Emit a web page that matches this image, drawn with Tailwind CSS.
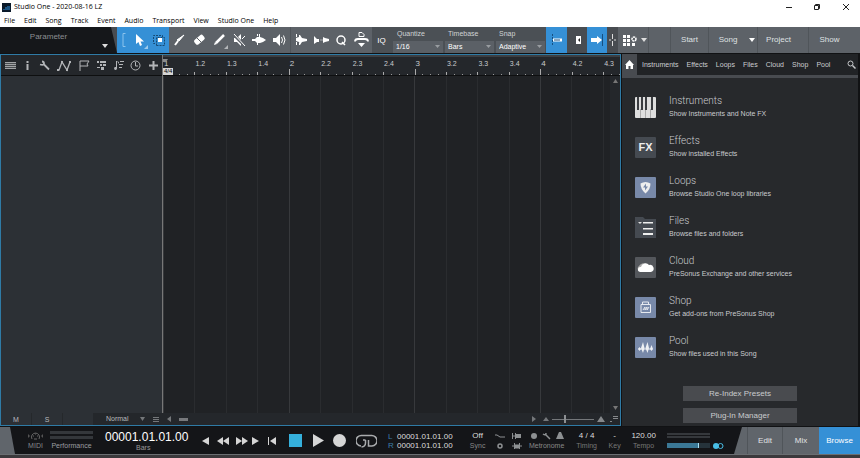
<!DOCTYPE html>
<html lang="en">

<head>
  <meta charset="UTF-8" />
  <meta name="viewport" content="width=device-width, initial-scale=1.0" />
  <title>Studio One - 2020-08-16 LZ</title>
  <script src="https://cdn.jsdelivr.net/npm/@tailwindcss/browser@4"></script>
</head>

<body class="flex flex-col h-screen overflow-hidden bg-[#111214] font-['Liberation_Sans',Arial,sans-serif] text-[8px] leading-[10px] text-[#c9cbce]">

  <!-- Title bar -->
  <header class="shrink-0 h-[27px] bg-white text-black font-['Open_Sans','Noto_Sans',sans-serif]">
    <div class="flex items-center h-[14px] pl-[2px]">
      <svg class="w-[9px] h-[9px]" viewBox="0 0 9 9"><rect width="9" height="9" fill="#0b1a2a" /><path d="M1 6h2V4h2V3h3v4H1z" fill="#1d5684" /></svg>
      <h1 class="ml-[3px] text-[7px]">Studio One - 2020-08-16 LZ</h1>
      <div class="ml-auto flex text-[#222]">
        <button aria-label="Minimize" class="w-[29px] h-[12px] flex justify-center items-center"><svg class="w-[8px] h-[8px]" viewBox="0 0 8 8"><path d="M1 4.5h6" stroke="currentColor" /></svg></button>
        <button aria-label="Restore" class="w-[28px] h-[12px] flex justify-center items-center"><svg class="w-[8px] h-[8px]" viewBox="0 0 8 8" fill="none" stroke="currentColor"><path d="M1.5 2.5h4v4h-4zM2.500 2.500v-1h4v4h-1" /></svg></button>
        <button aria-label="Close" class="w-[29px] h-[12px] flex justify-center items-center"><svg class="w-[8px] h-[8px]" viewBox="0 0 8 8"><path d="M1 1l6 6M7 1L1 7" stroke="currentColor" /></svg></button>
      </div>
    </div>
    <nav class="flex h-[13px] items-center pl-[4px] gap-[9px] text-[7px]">
      <button>File</button>
      <button>Edit</button>
      <button>Song</button>
      <button>Track</button>
      <button>Event</button>
      <button>Audio</button>
      <button>Transport</button>
      <button>View</button>
      <button>Studio One</button>
      <button>Help</button>
    </nav>
  </header>

  <!-- Toolbar -->
  <div class="shrink-0 flex h-[26px] bg-[#5d6268] text-white">
    <div class="w-[117px] bg-[#484c51]">
      <button class="relative w-full h-full bg-[#15171a] [clip-path:polygon(0_0,111px_0,100%_100%,0_100%)] text-[8px] text-[#8b8e92]">
        <span class="block -mt-[7px] pr-[20px]">Parameter</span>
        <svg class="absolute right-[9px] bottom-[5px] w-[6px] h-[4px]" viewBox="0 0 6 4"><path d="M0 0h6L3 4z" fill="#ddd" /></svg>
      </button>
    </div>
    <div class="flex items-center bg-[#3590d6] w-[52px]">
      <svg class="w-[12px] h-[16px]" viewBox="0 0 12 16" fill="none"><path d="M8.500 1.500h-2.500v13h2.500" stroke="#8cc3ec" /></svg>
      <button aria-label="Arrow tool" class="w-[20px]"><svg class="w-[20px] h-[20px]" viewBox="0 0 20 20"><path d="M7 4v10l2.500-2 1.500 4 2-1-1.500-3.500H15z" fill="#fff" /><path d="M19 15v4h-4z" fill="#9ccbee" /></svg></button>
      <button aria-label="Range tool" class="w-[20px]"><svg class="w-[20px] h-[20px]" viewBox="0 0 20 20"><path d="M13.500 7V5.500h-9v8H7" fill="none" stroke="#174a74" stroke-dasharray="2 1" /><rect x="9" y="8" width="4" height="4" fill="#fff" /><path d="M7.500 15.500h8v-8h-8z" fill="none" stroke="#174a74" stroke-dasharray="2 1" /></svg></button>
    </div>
    <div class="flex items-center w-[122px] border-r border-[#50555a]">
      <button aria-label="Split tool"><svg class="w-[20px] h-[20px]" viewBox="0 0 20 20"><path d="M15 5l-5 6-2-1z" fill="#fff" stroke="#fff" /><path d="M9 11l-3 4" stroke="#fff" stroke-width="2" /></svg></button>
      <button aria-label="Eraser tool"><svg class="w-[20px] h-[20px]" viewBox="0 0 20 20"><rect x="5" y="7" width="11" height="6" rx="2" fill="#fff" transform="rotate(-40 10 10)" /><path d="M8 8l4 4" stroke="#5d6268" /></svg></button>
      <button aria-label="Paint tool"><svg class="w-[20px] h-[20px]" viewBox="0 0 20 20"><path d="M15 5l-8 8" stroke="#fff" stroke-width="2.500" /><path d="M6 12l2 2-3 1z" fill="#fff" /><path d="M19 15v4h-4z" fill="#b3b6b9" /></svg></button>
      <button aria-label="Mute tool"><svg class="w-[20px] h-[20px]" viewBox="0 0 20 20"><path d="M5 8h3l4-4v12l-4-4H5z" fill="#fff" /><path d="M4 4l12 12" stroke="#5d6268" stroke-width="3" /><path d="M5 4l11 12M13 9l3-3" stroke="#fff" /></svg></button>
      <button aria-label="Bend tool"><svg class="w-[20px] h-[20px]" viewBox="0 0 20 20"><path d="M3 9h3l2-2h2v-3h1v3l3 1 3 2-3 2-3 1H8l-2-2H3z" fill="#fff" /><path d="M8.500 4v12" stroke="#fff" stroke-dasharray="2 1" /></svg></button>
      <button aria-label="Listen tool"><svg class="w-[20px] h-[20px]" viewBox="0 0 20 20"><path d="M4 8h3l4-4v12l-4-4H4z" fill="#fff" /><path d="M12.500 7q2 3 0 6M14.500 5.500q3 4.500 0 9" fill="none" stroke="#fff" /></svg></button>
    </div>
    <div class="flex items-center w-[81px]">
      <button aria-label="Strip silence"><svg class="w-[20px] h-[20px]" viewBox="0 0 20 20"><path d="M5.500 4v12M8.500 5v10" stroke="#fff" stroke-dasharray="3 1" /><path d="M5 8l3-1 1-2 2 3 5 1v2l-5 1-2 3-1-3-3-1z" fill="#fff" /></svg></button>
      <button aria-label="Transients"><svg class="w-[20px] h-[20px]" viewBox="0 0 20 20"><path d="M3 6v8l3-2h2V9H6zM12 7v6l2-1 4-1V9l-4-1z" fill="#fff" /><path d="M9.500 10h3" stroke="#fff" stroke-dasharray="1 1" /></svg></button>
      <button aria-label="Quantize"><svg class="w-[20px] h-[20px]" viewBox="0 0 20 20" fill="none" stroke="#fff"><circle cx="10" cy="10" r="4" stroke-width="1.500" /><path d="M11 12l3 3" stroke-width="1.500" /></svg></button>
      <button aria-label="Audio bend"><svg class="w-[20px] h-[20px]" viewBox="0 0 20 20"><path d="M8 2.500h3l2 2v2H8z" fill="none" stroke="#fff" /><path d="M4 11.500q0-2.500 3-2.500h7q3 0 3 2.500" fill="none" stroke="#fff" stroke-width="1.800" /><path d="M7 13h7l-3.500 4z" fill="#fff" /></svg></button>
    </div>
    <div class="flex items-center w-[174px] bg-[#4b5055]">
      <button class="w-[21px] h-full text-[8px] pt-[1px] pr-[2px]">IQ</button>
      <label class="w-[50px] mr-[2px] text-[7px] text-[#d0d2d4]"><span class="block h-[13px] pt-[1px] pl-[4px]">Quantize</span>
        <span class="flex items-center h-[12px] bg-[#5b6066] pr-[3px]"><select class="appearance-none grow min-w-0 pl-[3px] text-white"><option>1/16</option></select><svg class="w-[5px] h-[3px]" viewBox="0 0 5 3"><path d="M0 0h5L2.500 3z" fill="#999da1" /></svg></span></label>
      <label class="w-[49px] mr-[2px] text-[7px] text-[#d0d2d4]"><span class="block h-[13px] pt-[1px] pl-[3px]">Timebase</span>
        <span class="flex items-center h-[12px] bg-[#5b6066] pr-[3px]"><select class="appearance-none grow min-w-0 pl-[3px] text-white"><option>Bars</option></select><svg class="w-[5px] h-[3px]" viewBox="0 0 5 3"><path d="M0 0h5L2.500 3z" fill="#999da1" /></svg></span></label>
      <label class="w-[49px] text-[7px] text-[#d0d2d4]"><span class="block h-[13px] pt-[1px] pl-[3px]">Snap</span>
        <span class="flex items-center h-[12px] bg-[#5b6066] pr-[3px]"><select class="appearance-none grow min-w-0 pl-[3px] text-white"><option>Adaptive</option></select><svg class="w-[5px] h-[3px]" viewBox="0 0 5 3"><path d="M0 0h5L2.500 3z" fill="#999da1" /></svg></span></label>
    </div>
    <div class="flex bg-[#484c51] w-[72px]">
      <button aria-label="Snap to grid" class="w-[21px] bg-[#3590d6]"><svg class="w-[20px] h-[20px]" viewBox="0 0 20 20" fill="none" stroke="#164f80"><path d="M6.500 4v12" stroke-dasharray="2 1" /><path d="M7 10h9" stroke="#fff" stroke-width="3" /><path d="M8 10h6" /></svg></button>
      <button aria-label="Autoscroll" class="w-[20px]"><svg class="w-[20px] h-[20px]" viewBox="0 0 20 20"><rect x="9" y="6" width="5" height="8" fill="#fff" /><path d="M13 8v4l-2-2z" fill="#222" /></svg></button>
      <button aria-label="Follow" class="w-[20px] bg-[#3590d6]"><svg class="w-[20px] h-[20px]" viewBox="0 0 20 20"><path d="M4 8h6V6l5 4-5 4v-2H4z" fill="#fff" /><path d="M15.500 4v12" stroke="#164f80" /></svg></button>
      <button aria-label="Cursor" class="w-[11px]"><svg class="w-[11px] h-[20px]" viewBox="0 0 11 20"><path d="M5.500 4v12M2 10h2M7 10h2" stroke="#ddd" stroke-dasharray="5 2" /></svg></button>
    </div>
    <button aria-label="Macros" class="flex items-center gap-[4px] w-[31px] pl-[5px] border-r border-[#50555a]">
      <svg class="w-[14px] h-[11px] shrink-0" viewBox="0 0 14 11"><path d="M0 0h3v3H0zM4 0h3v3H4zM0 4h3v3H0zM4 4h3v3H4zM0 8h3v3H0zM4 8h3v3H4zM9 8h3v3H9z" fill="#fff" /><circle cx="11" cy="4" r="2" fill="none" stroke="#fff" stroke-width="1.500" stroke-dasharray="2 .5" /></svg>
      <svg class="w-[6px] h-[4px] shrink-0" viewBox="0 0 6 4"><path d="M0 0h6L3 4z" fill="#ddd" /></svg>
    </button>
    <nav class="flex grow text-[8px] text-[#dfe1e3]">
      <span class="w-[22px] border-r border-[#50555a]"></span>
      <button class="w-[38px] border-r border-[#50555a]">Start</button>
      <button class="w-[49px] border-r border-[#50555a] flex items-center justify-center gap-[12px] pl-[8px]">Song <svg class="w-[6px] h-[4px]" viewBox="0 0 6 4"><path d="M0 0h6L3 4z" fill="#fff" /></svg></button>
      <button class="w-[51px] border-r border-[#50555a] pr-[9px]">Project</button>
      <button class="w-[41px]">Show</button>
    </nav>
  </div>

  <!-- Arrangement and browser -->
  <main class="grow min-h-0 flex pt-[1px] pb-[1px] pr-[2px]">
    <section class="grow min-w-0 flex flex-col border border-[#2f7ba6] bg-[#202225]">
      <div class="flex grow min-h-0">
        <!-- Track list -->
        <div class="w-[162px] shrink-0 flex flex-col bg-[#2c3035] border-r border-[#777]">
          <div class="flex items-center h-[21px] bg-[#24272b] border-b border-[#0e0f10] text-[#b3b5b8]">
            <button aria-label="Track list" class="w-[18px] pl-[4px]"><svg class="w-[11px] h-[11px]" viewBox="0 0 11 11" fill="#a2a4a7"><path d="M0 2h11v1H0zM0 4h11v1H0zM0 6h11v1H0zM0 8h11v1H0z" /><path d="M0 2h11v7H0z" opacity=".3" /></svg></button>
            <button aria-label="Inspector" class="w-[17px] flex justify-center"><svg class="w-[5px] h-[11px]" viewBox="0 0 5 11" fill="currentColor"><path d="M1.500 1h2v2h-2zM1.500 4h2v6h-2z" /></svg></button>
            <button aria-label="Setup" class="w-[17px] flex justify-center"><svg class="w-[11px] h-[11px]" viewBox="0 0 11 11" fill="none" stroke="currentColor" stroke-width="1.800"><path d="M1 4.500q4 1 4-1 0-2-2-2M5 4.500l5 5" /></svg></button>
            <button aria-label="Automation" class="w-[22px] flex justify-center"><svg class="w-[16px] h-[13px]" viewBox="0 0 16 13" fill="none" stroke="currentColor"><path d="M1 11h2l3-8 5 8 3-8h1" stroke-width="1.300" /><path d="M5 2h2v2H5zM10 10h2v2h-2zM13 2h2v2h-2zM1 10h2v2H1z" fill="currentColor" stroke="none" /></svg></button>
            <button aria-label="Markers" class="w-[18px] flex justify-center"><svg class="w-[11px] h-[12px]" viewBox="0 0 11 12" fill="none" stroke="currentColor"><path d="M1 12V2h9L8 5l1 2H1" /></svg></button>
            <button aria-label="Arranger" class="w-[17px] flex justify-center"><svg class="w-[10px] h-[11px]" viewBox="0 0 10 11" fill="currentColor"><path d="M0 1h2v2H0zM3 1h6v2H3zM3 4h2v2H3zM6 4h3v2H6zM0 7h3v1H0zM4 7h3v3H4z" /></svg></button>
            <button aria-label="Tempo" class="w-[17px] flex justify-center"><svg class="w-[11px] h-[11px]" viewBox="0 0 11 11" fill="currentColor"><path d="M3 1h1v7a1.500 1.500 0 1 1-1-1zM4 1l2 1v2zM7 1h4v1H7zM6 4h4v1H6zM6 7h3v1H6z" /></svg></button>
            <button aria-label="Time" class="w-[17px] flex justify-center"><svg class="w-[11px] h-[11px]" viewBox="0 0 11 11" fill="none" stroke="currentColor"><circle cx="5.500" cy="5.500" r="4.500" /><path d="M5.500 2v4H8" /></svg></button>
            <button aria-label="Add track" class="w-[18px] flex justify-center"><svg class="w-[11px] h-[11px]" viewBox="0 0 11 11" stroke="currentColor" stroke-width="2"><path d="M5.500 1v9M1 5.500h9" /></svg></button>
          </div>
        </div>
        <!-- Timeline -->
        <div class="relative grow min-w-0 flex flex-col">
          <div class="h-[21px] shrink-0 border-t-2 border-t-[#3c3f43] border-b border-b-[#0e0f10] bg-[#24272b]">
            <div id="ruler" class="flex h-full overflow-hidden"></div>
          </div>
          <div class="flex grow min-h-0">
            <div id="lanes" class="flex grow min-w-0 overflow-hidden"></div>
            <div class="w-[10px] bg-[#24272b] flex flex-col justify-between items-center py-[3px]">
              <svg class="w-[5px] h-[4px]" viewBox="0 0 5 4"><path d="M0 4h5L2.500 0z" fill="#777" /></svg>
              <svg class="w-[5px] h-[4px]" viewBox="0 0 5 4"><path d="M0 0h5L2.500 4z" fill="#777" /></svg>
            </div>
          </div>
          <div class="absolute left-0 top-[4px]">
            <svg class="w-[5px] h-[9px]" viewBox="0 0 5 9"><path d="M0 0h5L3 3H0z" fill="#8a8c8e" /></svg>
            <span class="block h-[7px] px-px bg-[#d5d5d5] text-black text-[6px] leading-[7px]">4/4</span>
          </div>
        </div>
      </div>
      <div class="flex items-center shrink-0 h-[12px] bg-[#24272b] text-[7px] text-[#b8babd]">
        <div class="flex items-center w-[92px] h-full bg-[#2c3035]">
          <button class="w-[31px] h-full pt-px border-r border-[#25282b]">M</button>
          <button class="w-[31px] h-full pt-px border-r border-[#25282b]">S</button>
        </div>
        <select aria-label="Track height" class="appearance-none w-[40px] ml-[13px]"><option>Normal</option></select>
        <svg class="w-[35px] h-[8px] -ml-[7px]" viewBox="0 0 35 8" fill="#74777a"><path d="M1 2h5L3.500 6zM14 2h6v1h-6zM14 4h6v1h-6zM14 6h6v1h-6zM32 1v6l-4-3z" /></svg>
        <span class="ml-[5px] w-[9px] h-[3px] bg-[#77797c]"></span>
        <div class="ml-auto flex items-center">
          <svg class="w-[18px] h-[8px]" viewBox="0 0 18 8" fill="#74777a"><path d="M1 1v6l4-3zM12 6h6l-3-4z" /></svg>
          <input type="range" aria-label="Zoom" min="0" max="100" value="30" class="appearance-none w-[42px] h-px mx-[3px] bg-[#74777a] [&::-webkit-slider-thumb]:appearance-none [&::-webkit-slider-thumb]:w-[2px] [&::-webkit-slider-thumb]:h-[8px] [&::-webkit-slider-thumb]:bg-[#8c8f92]" />
          <svg class="w-[23px] h-[8px]" viewBox="0 0 23 8" fill="#85888b"><path d="M0 7h8L4 1zM16 1h5v1h-5zM16 3h5v1h-5zM13 6h2v1h-2z" /></svg>
        </div>
      </div>
    </section>

    <!-- Browser -->
    <aside class="w-[236px] shrink-0 ml-[1px] flex flex-col bg-[#27292c]">
      <nav class="flex items-center h-[21px] shrink-0 bg-[#212326] text-[7px] text-[#cbcdd0]">
        <button aria-label="Home" class="w-[15px] h-full bg-[#484b50] flex justify-center items-center"><svg class="w-[9px] h-[9px]" viewBox="0 0 9 9"><path d="M4.500 0L9 5H8v4H5.500V6h-2v3H1V5H0z" fill="#fff" /></svg></button>
        <div class="flex gap-[8px] pl-[5px]">
          <button>Instruments</button>
          <button>Effects</button>
          <button>Loops</button>
          <button>Files</button>
          <button>Cloud</button>
          <button>Shop</button>
          <button>Pool</button>
        </div>
        <button aria-label="Search" class="ml-auto mr-[2px]"><svg class="w-[9px] h-[9px]" viewBox="0 0 9 9" fill="none" stroke="#c5c7ca"><circle cx="3.500" cy="3.500" r="2.500" /><path d="M5.500 5.500L8.500 8.500" stroke-width="1.500" /></svg></button>
      </nav>
      <div class="h-[3px] shrink-0 bg-[#484b50]"></div>
      <div class="flex flex-col gap-[14px] pt-[16px] pl-[13px]">
        <a href="#instruments" class="flex h-[26px] gap-[13px] items-center">
          <svg class="w-[21px] h-[21px]" viewBox="0 0 21 21"><rect width="21" height="21" rx="1" fill="#dedede" /><path d="M5.500 12v9M10.500 12v9M15.500 12v9" stroke="#aaa" /><path d="M2 0h2v13H2zM6 0h2v13H6zM10 0h2v13h-2zM16 0h2v13h-2z" fill="#3a3c40" /></svg>
          <span><span class="block font-['Roboto',sans-serif] font-light text-[10px] leading-[13px]">Instruments</span><span class="block text-[7px] leading-[13px]">Show Instruments and Note FX</span></span>
        </a>
        <a href="#effects" class="flex h-[26px] gap-[13px] items-center">
          <span class="w-[21px] h-[21px] rounded-[1px] bg-[#454a51] text-center font-bold text-[11px] leading-[21px] text-[#eee]">FX</span>
          <span><span class="block font-['Roboto',sans-serif] font-light text-[10px] leading-[13px]">Effects</span><span class="block text-[7px] leading-[13px]">Show installed Effects</span></span>
        </a>
        <a href="#loops" class="flex h-[26px] gap-[13px] items-center">
          <svg class="w-[21px] h-[21px]" viewBox="0 0 21 21"><rect width="21" height="21" rx="1" fill="#7889a9" /><path d="M5.500 6.500q5-3 10 0 0 6-5 10-5-4-5-10z" fill="#eee" /><path d="M11 6.500l-3 4h2v3l3-4h-2z" fill="#7889a9" /></svg>
          <span><span class="block font-['Roboto',sans-serif] font-light text-[10px] leading-[13px]">Loops</span><span class="block text-[7px] leading-[13px]">Browse Studio One loop libraries</span></span>
        </a>
        <a href="#files" class="flex h-[26px] gap-[13px] items-center">
          <svg class="w-[21px] h-[21px]" viewBox="0 0 21 21"><path d="M0 0h8l2 2h11v19H0z" fill="#454a51" /><path d="M3 5h4L5 7z" fill="#ddd" /><path d="M8 5h10v1.500H8zM8 11h10v1.500H8zM8 16h10v2H8z" fill="#eee" /></svg>
          <span><span class="block font-['Roboto',sans-serif] font-light text-[10px] leading-[13px]">Files</span><span class="block text-[7px] leading-[13px]">Browse files and folders</span></span>
        </a>
        <a href="#cloud" class="flex h-[26px] gap-[13px] items-center">
          <svg class="w-[21px] h-[21px]" viewBox="0 0 21 21"><rect width="21" height="21" rx="1" fill="#54575c" /><path d="M4 14a3 3 0 0 1 0-5 5 5 0 0 1 7-2L7 14z" fill="#aaa" /><path d="M5 15a2.500 2.500 0 0 1 1-5 4.500 4.500 0 0 1 8-2 3.600 3.600 0 0 1 2 7z" fill="#fff" /></svg>
          <span><span class="block font-['Roboto',sans-serif] font-light text-[10px] leading-[13px]">Cloud</span><span class="block text-[7px] leading-[13px]">PreSonus Exchange and other services</span></span>
        </a>
        <a href="#shop" class="flex h-[26px] gap-[13px] items-center">
          <svg class="w-[21px] h-[21px]" viewBox="0 0 21 21"><rect width="21" height="21" rx="1" fill="#7889a9" /><path d="M6 7.500h9.500v8H6zM7.500 7V5h6v2" fill="none" stroke="#e6e9ef" /><path d="M8 13l2-3v3l2-3v3l2-3" fill="none" stroke="#e6e9ef" /></svg>
          <span><span class="block font-['Roboto',sans-serif] font-light text-[10px] leading-[13px]">Shop</span><span class="block text-[7px] leading-[13px]">Get add-ons from PreSonus Shop</span></span>
        </a>
        <a href="#pool" class="flex h-[26px] gap-[13px] items-center">
          <svg class="w-[21px] h-[21px]" viewBox="0 0 21 21"><rect width="21" height="21" rx="1" fill="#7889a9" /><path d="M3 12l1.500-2L6 12l-1.500 2zM6 11l2-6 1.500 6L8 16zM10.500 11l2-6 1.500 6-1.500 5zM15 12l1.500-4 1.500 4-1.500 2z" fill="#eef0f4" /><path d="M3.500 12h14" stroke="#eef0f4" /></svg>
          <span><span class="block font-['Roboto',sans-serif] font-light text-[10px] leading-[13px]">Pool</span><span class="block text-[7px] leading-[13px]">Show files used in this Song</span></span>
        </a>
      </div>
      <div class="flex flex-col items-center gap-[7px] mt-[26px]">
        <button class="w-[114px] h-[15px] bg-[#494b4f]">Re-Index Presets</button>
        <button class="w-[114px] h-[15px] bg-[#494b4f]">Plug-In Manager</button>
      </div>
    </aside>
  </main>

  <!-- Transport -->
  <footer class="shrink-0 flex h-[27px] bg-[#60656b]">
    <div class="grow flex items-center bg-[#141518] pl-[26px] [clip-path:polygon(10px_0,100%_0,calc(100%-8px)_100%,15px_100%)]">
      <div class="w-[19px] flex flex-col items-center text-[7px] leading-[8px] text-[#85888b]">
        <svg class="w-[17px] h-[10px]" viewBox="0 0 17 10" fill="none" stroke="#666"><path d="M5 8a4 4 0 1 1 7 0" /><path d="M8 3h1M6 5h1M10 5h1M7 8h3" /><path d="M1 3l2 2-2 2zM16 3l-2 2 2 2z" fill="#555" stroke="none" /></svg>
        <span class="pt-[1px]">MIDI</span>
      </div>
      <div class="w-[43px] ml-[5px] text-[7px] leading-[8px] text-[#9b9da0]">
        <div class="h-[3px] bg-[#34373b] mb-[2px]"></div>
        <div class="h-[3px] bg-[#34373b] mb-[3px]"></div>
        <div class="text-center">Performance</div>
      </div>
      <div class="w-[86px] ml-[12px] text-[12px] leading-[14px] text-white"><div>00001.01.01.00</div><div class="text-[7px] leading-[7px] text-[#999] pl-[31px]">Bars</div></div>
      <div class="flex items-center ml-[10px] text-[#d6d6d6]">
        <button aria-label="Previous bar" class="w-[16px]"><svg class="w-[8px] h-[8px]" viewBox="0 0 8 8" fill="currentColor"><path d="M8 0v8L1 4z" /></svg></button>
        <button aria-label="Rewind" class="w-[19px]"><svg class="w-[12px] h-[8px]" viewBox="0 0 12 8" fill="currentColor"><path d="M6 0v8L0 4zM12 0v8L6 4z" /></svg></button>
        <button aria-label="Forward" class="w-[16px]"><svg class="w-[12px] h-[8px]" viewBox="0 0 12 8" fill="currentColor"><path d="M0 0v8l6-4zM6 0v8l6-4z" /></svg></button>
        <button aria-label="Next bar" class="w-[16px]"><svg class="w-[8px] h-[8px]" viewBox="0 0 8 8" fill="currentColor"><path d="M0 0v8l7-4z" /></svg></button>
        <button aria-label="Return to zero" class="w-[21px]"><svg class="w-[8px] h-[8px]" viewBox="0 0 8 8" fill="currentColor"><path d="M0 0h1v8H0zM8 0v8L2 4z" /></svg></button>
        <button aria-label="Stop" class="w-[24px]"><svg class="w-[13px] h-[13px]" viewBox="0 0 13 13"><path d="M0 0h13v13H0z" fill="#35b0dc" /></svg></button>
        <button aria-label="Play" class="w-[20px]"><svg class="w-[12px] h-[13px]" viewBox="0 0 12 13" fill="currentColor"><path d="M0 0v13l11-6.500z" /></svg></button>
        <button aria-label="Record" class="w-[23px]"><svg class="w-[13px] h-[13px]" viewBox="0 0 13 13" fill="currentColor"><circle cx="6.500" cy="6.500" r="6.500" /></svg></button>
        <button aria-label="Loop" class="w-[32px]"><svg class="w-[21px] h-[14px]" viewBox="0 0 21 14" fill="none" stroke="#a9abad" stroke-width="1.500"><path d="M5 12A5 5 0 0 1 5.500 1.500h10A5 5 0 0 1 16 12h-3.500V6M9.500 6v3q0 3.500-4 4M7 6h2.500" /></svg></button>
      </div>
      <div class="text-[8px] leading-[9px] text-[#ddd]">
        <div class="flex"><span class="w-[9px] text-[#3d7fa8]">L</span>00001.01.01.00</div>
        <div class="flex"><span class="w-[9px] text-[#3d7fa8]">R</span>00001.01.01.00</div>
      </div>
      <div class="w-[22px] ml-[14px] text-center text-[8px] leading-[10px] text-[#ddd]">Off<div class="text-[7px] text-[#888]">Sync</div></div>
      <svg class="w-[28px] h-[20px] ml-[6px]" viewBox="0 0 28 20" fill="none" stroke="#8d9092"><path d="M0 4h2l3 2h5M17.500 2v6M20.500 2v6M18 5h3" /><path d="M21 3h5v4h-5z" fill="#8d9092" stroke="none" /><circle cx="5" cy="15" r="2" stroke-width="1.500" /><path d="M17 15h10M19.500 12v6M24.500 12v6" /><path d="M20 14h4v3h-4z" fill="#8d9092" /></svg>
      <div class="w-[38px] ml-[5px] text-center text-[7px] leading-[9px] text-[#888]">
        <svg class="w-[36px] h-[10px] mx-auto" viewBox="0 0 36 10" fill="#8d9092"><circle cx="5" cy="5" r="3" /><path d="M14 3q3 2 3-1M17 4l4 4" fill="none" stroke="#8d9092" stroke-width="1.500" /><path d="M30 1h2l3 7h-8z" /></svg>Metronome
      </div>
      <div class="w-[24px] ml-[9px] text-center text-[8px] leading-[10px] text-[#ddd]">4 / 4<div class="text-[7px] text-[#777]">Timing</div></div>
      <div class="w-[16px] ml-[8px] text-center text-[8px] leading-[10px] text-[#ddd]">-<div class="text-[7px] text-[#777]">Key</div></div>
      <div class="w-[28px] ml-[7px] text-center text-[8px] leading-[10px] text-[#ddd]">120.00<div class="text-[7px] text-[#777]">Tempo</div></div>
      <div class="w-[43px] ml-[9px]">
        <div class="h-[2px] bg-[#35383c] mb-[1px]"></div>
        <div class="h-[2px] bg-[#35383c] mb-[5px]"></div>
        <div class="h-[5px] bg-[#26333b]"><div class="w-[32px] h-full bg-[#3b7896] border-r border-[#a9e2f6]"></div></div>
      </div>
      <svg class="w-[11px] h-[6px] ml-[3px] mt-[11px]" viewBox="0 0 11 6"><circle cx="3" cy="3" r="3" fill="#48bde5" /><circle cx="7.500" cy="3" r="2.500" fill="none" stroke="#48bde5" /></svg>
    </div>
    <nav class="flex text-[8px] text-[#e2e3e5]">
      <span class="w-[6px] border-r border-[#50555a]"></span>
      <button class="w-[35px] border-r border-[#50555a]">Edit</button>
      <button class="w-[36px]">Mix</button>
      <button class="w-[41px] bg-[#3590d6] text-white">Browse</button>
    </nav>
  </footer>
  <div class="shrink-0 h-[4px] bg-[#3b393c] border-t border-[#6b6e72]"></div>

  <script>
    // One cell per beat, four beats to the bar
    const ruler = document.getElementById("ruler");
    const lanes = document.getElementById("lanes");

    for (let i = 0; i < 15; i++) {
      const bar = Math.floor(i / 4) + 1;
      const beat = (i % 4) + 1;
      const first = beat === 1;
      const label = first ? bar : bar + "." + beat;

      ruler.innerHTML += `
        <div class="w-[6.88%] shrink-0 h-full flex flex-col justify-between">
          <span class="h-[12px] pt-[2px] pl-px ${first ? "text-[8px]" : "text-[7px]"}">${label}</span>
          <span class="flex items-end h-[6px]">
            <i class="w-px mr-auto bg-[#aaa] ${first ? "h-[6px]" : "h-[3px]"}"></i>
            <i class="w-px mr-auto h-px bg-[#999]"></i>
            <i class="w-px mr-auto h-px bg-[#999]"></i>
            <i class="w-px mr-auto h-px bg-[#999]"></i>
          </span>
        </div>`;
      lanes.innerHTML += `
        <div class="w-[7.03%] shrink-0 border-l ${first ? "border-[#37393c]" : "border-[#2a2c2f]"}"></div>`;
    }
  </script>

</body>

</html>
